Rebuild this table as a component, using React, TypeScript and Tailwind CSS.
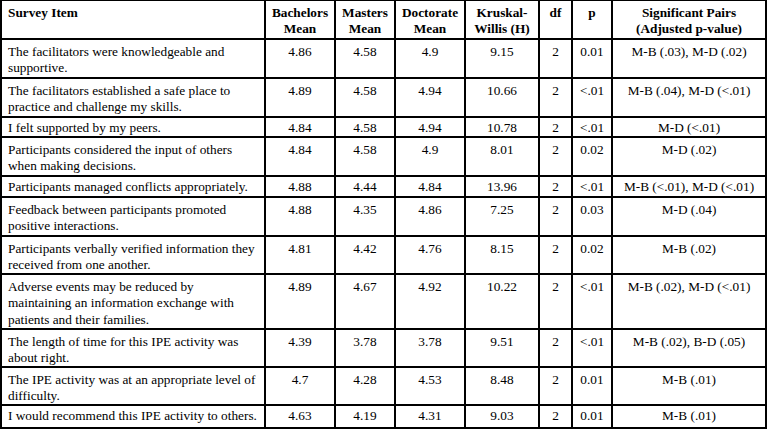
// border-box widths of the cells, each one including its 2px right rule
const cols = ["w-[264px]", "w-[70px]", "w-[60px]", "w-[70px]", "w-[74px]", "w-[33px]", "w-[40px]", "w-[154px]"];

const headers: string[][] = [
  ["Survey Item"],
  ["Bachelors", "Mean"],
  ["Masters", "Mean"],
  ["Doctorate", "Mean"],
  ["Kruskal-", "Willis (H)"],
  ["df"],
  ["p"],
  ["Significant Pairs", "(Adjusted p-value)"],
];

const rows: { item: string[]; vals: string[]; h: string; pt: string }[] = [
  { item: ["The facilitators were knowledgeable and", "supportive."], vals: ["4.86", "4.58", "4.9", "9.15", "2", "0.01", "M-B (.03), M-D (.02)"], h: "h-[39px]", pt: "pt-[4px]" },
  { item: ["The facilitators established a safe place to", "practice and challenge my skills."], vals: ["4.89", "4.58", "4.94", "10.66", "2", "<.01", "M-B (.04), M-D (<.01)"], h: "h-[39px]", pt: "pt-[4px]" },
  { item: ["I felt supported by my peers."], vals: ["4.84", "4.58", "4.94", "10.78", "2", "<.01", "M-D (<.01)"], h: "h-[20px]", pt: "pt-[2px]" },
  { item: ["Participants considered the input of others", "when making decisions."], vals: ["4.84", "4.58", "4.9", "8.01", "2", "0.02", "M-D (.02)"], h: "h-[39px]", pt: "pt-[4px]" },
  { item: ["Participants managed conflicts appropriately."], vals: ["4.88", "4.44", "4.84", "13.96", "2", "<.01", "M-B (<.01), M-D (<.01)"], h: "h-[21px]", pt: "pt-[2px]" },
  { item: ["Feedback between participants promoted", "positive interactions."], vals: ["4.88", "4.35", "4.86", "7.25", "2", "0.03", "M-D (.04)"], h: "h-[39px]", pt: "pt-[4px]" },
  { item: ["Participants verbally verified information they", "received from one another."], vals: ["4.81", "4.42", "4.76", "8.15", "2", "0.02", "M-B (.02)"], h: "h-[38px]", pt: "pt-[4px]" },
  { item: ["Adverse events may be reduced by", "maintaining an information exchange with", "patients and their families."], vals: ["4.89", "4.67", "4.92", "10.22", "2", "<.01", "M-B (.02), M-D (<.01)"], h: "h-[55px]", pt: "pt-[4px]" },
  { item: ["The length of time for this IPE activity was", "about right."], vals: ["4.39", "3.78", "3.78", "9.51", "2", "<.01", "M-B (.02), B-D (.05)"], h: "h-[38px]", pt: "pt-[4px]" },
  { item: ["The IPE activity was at an appropriate level of", "difficulty."], vals: ["4.7", "4.28", "4.53", "8.48", "2", "0.01", "M-B (.01)"], h: "h-[38px]", pt: "pt-[4px]" },
  { item: ["I would recommend this IPE activity to others."], vals: ["4.63", "4.19", "4.31", "9.03", "2", "0.01", "M-B (.01)"], h: "h-[23px]", pt: "pt-[2px]" },
];

function Lines({ lines }: { lines: string[] }) {
  return (
    <>
      {lines.map((l, i) => (
        <span key={i} className="block whitespace-nowrap">{l}</span>
      ))}
    </>
  );
}

export default function App() {
  return (
    <div className="w-[769px] h-[431px] bg-white overflow-hidden">
      <div className="w-[767px] border-l-2 border-t border-black text-black text-[13.3px] leading-[16.3px] font-['Liberation_Serif','Times_New_Roman',serif]">
        {/* header */}
        <div className="flex h-[39px] border-b-2 border-black font-bold">
          {headers.map((h, i) => (
            <div
              key={i}
              className={`${cols[i]} shrink-0 border-r-2 border-black pt-[4px] ${i === 0 ? "pl-[6px] text-left" : "text-center"}`}
            >
              <Lines lines={h} />
            </div>
          ))}
        </div>

        {/* body */}
        {rows.map((r, ri) => (
          <div key={ri} className={`flex ${r.h} border-b-2 border-black`}>
            <div className={`${cols[0]} shrink-0 border-r-2 border-black pl-[6px] ${r.pt}`}>
              <Lines lines={r.item} />
            </div>
            {r.vals.map((v, vi) => (
              <div
                key={vi}
                className={`${cols[vi + 1]} shrink-0 border-r-2 border-black text-center whitespace-nowrap ${r.pt}`}
              >
                {v}
              </div>
            ))}
          </div>
        ))}
      </div>
    </div>
  );
}
